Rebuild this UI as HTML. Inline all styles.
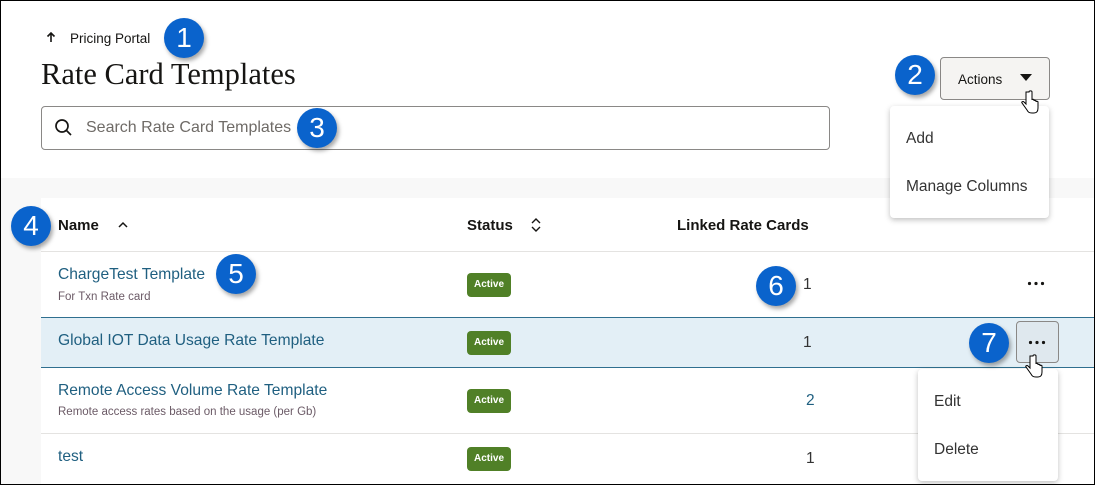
<!DOCTYPE html>
<html><head><style>
*{margin:0;padding:0;box-sizing:border-box}
body{width:1095px;height:485px;position:relative;overflow:hidden;background:#fff;font-family:"Liberation Sans",sans-serif;color:#161513}
.frame{position:absolute;left:0;top:0;width:1095px;height:485px;border:1px solid #000;z-index:50;pointer-events:none}
.a{position:absolute}
.c{position:absolute;width:40px;height:40px;border-radius:50%;background:#0a63cc;color:#fff;font-size:28px;line-height:40px;text-align:center;box-shadow:2px 3px 4px rgba(0,0,0,.35);z-index:20}
.link{color:#1f5f80;font-size:15.6px}
.sub{color:#6b5a66;font-size:11.5px}
.badge{position:absolute;left:467px;width:44px;height:24px;border-radius:4px;background:#508027;color:#fff;font-size:10px;font-weight:bold;text-align:center;line-height:24px}
.hl{position:absolute;left:41px;right:0;height:1px;background:#e4e3e1}
.menu{position:absolute;background:#fff;border-radius:4px;box-shadow:0 2px 6px rgba(0,0,0,.25);z-index:10;font-size:15.5px;color:#333}
</style></head><body>
<div class="frame"></div>
<svg class="a" style="left:46px;top:31px" width="10" height="12" viewBox="0 0 10 12"><path d="M5 11V2M1.5 5.5L5 2l3.5 3.5" fill="none" stroke="#161513" stroke-width="1.6"/></svg>
<div class="a" style="left:70px;top:31px;font-size:13.5px">Pricing Portal</div>
<div class="c" style="left:164px;top:18px">1</div>
<div class="a" style="left:41px;top:57px;font-family:'Liberation Serif',serif;font-size:30.5px">Rate Card Templates</div>
<div class="a" style="left:41px;top:106px;width:789px;height:44px;border:1px solid #8a8886;border-radius:4px"></div>
<svg class="a" style="left:54px;top:118px" width="20" height="20" viewBox="0 0 20 20"><circle cx="8" cy="8" r="6" fill="none" stroke="#161513" stroke-width="1.7"/><line x1="12.5" y1="12.5" x2="17" y2="17" stroke="#161513" stroke-width="1.7"/></svg>
<div class="a" style="left:86px;top:119px;font-size:16px;color:#6f6b67">Search Rate Card Templates</div>
<div class="c" style="left:297px;top:108px">3</div>
<div class="c" style="left:895px;top:55px">2</div>
<div class="a" style="left:940px;top:57px;width:110px;height:43px;border:1px solid #8a8886;border-radius:4px;background:#f5f4f2;font-size:13.5px;line-height:43px;padding-left:17px">Actions</div>
<svg class="a" style="left:1020px;top:74px" width="12" height="8"><path d="M0 0h12L6 7z" fill="#161513"/></svg>
<div class="menu" style="left:890px;top:106px;width:159px;height:112px"><div class="a" style="left:16px;top:24px">Add</div><div class="a" style="left:16px;top:72px">Manage Columns</div></div>
<div class="a" style="left:0;top:178px;width:1095px;height:20px;background:#f8f8f8"></div>
<div class="a" style="left:0;top:178px;width:41px;height:307px;background:#f8f8f8"></div>
<div class="c" style="left:11px;top:206px">4</div>
<div class="a" style="left:58px;top:217px;font-size:15px;font-weight:bold">Name</div>
<svg class="a" style="left:118px;top:221px" width="10" height="7"><path d="M1 6l4-4 4 4" fill="none" stroke="#161513" stroke-width="1.5"/></svg>
<div class="a" style="left:467px;top:217px;font-size:15px;font-weight:bold">Status</div>
<svg class="a" style="left:531px;top:217px" width="10" height="16"><path d="M1 6l4-4 4 4M1 10l4 4 4-4" fill="none" stroke="#161513" stroke-width="1.4"/></svg>
<div class="a" style="left:677px;top:217px;font-size:15px;font-weight:bold">Linked Rate Cards</div>
<div class="hl" style="top:251px"></div>
<div class="a link" style="left:58px;top:266px">ChargeTest Template</div>
<div class="a sub" style="left:58px;top:291px">For  Txn Rate card</div>
<div class="c" style="left:216px;top:254px">5</div>
<div class="badge" style="top:273px">Active</div>
<div class="a" style="left:803px;top:276px;font-size:15.5px;color:#333">1</div>
<div class="c" style="left:756px;top:266px">6</div>
<svg class="a" style="left:1027px;top:281px" width="18" height="5"><circle cx="2.5" cy="2.5" r="1.6" fill="#161513"/><circle cx="9" cy="2.5" r="1.6" fill="#161513"/><circle cx="15.5" cy="2.5" r="1.6" fill="#161513"/></svg>
<div class="a" style="left:41px;top:317px;right:0;height:51px;background:#e3eff6;border-top:1px solid #2f6f8f;border-bottom:1px solid #2f6f8f"></div>
<div class="a link" style="left:58px;top:332px">Global IOT Data Usage Rate Template</div>
<div class="badge" style="top:331px">Active</div>
<div class="a" style="left:803px;top:334px;font-size:15.5px;color:#333">1</div>
<div class="c" style="left:969px;top:323px">7</div>
<div class="a" style="left:1016px;top:321px;width:43px;height:42px;border:1px solid #8a8886;border-radius:4px;background:#dfe8ee"></div>
<svg class="a" style="left:1028px;top:340px" width="18" height="5"><circle cx="2.5" cy="2.5" r="1.6" fill="#161513"/><circle cx="9" cy="2.5" r="1.6" fill="#161513"/><circle cx="15.5" cy="2.5" r="1.6" fill="#161513"/></svg>
<div class="a link" style="left:58px;top:382px">Remote Access Volume Rate Template</div>
<div class="a sub" style="left:58px;top:406px">Remote access rates based on the usage (per Gb)</div>
<div class="badge" style="top:389px">Active</div>
<div class="a" style="left:806px;top:392px;font-size:15.5px;color:#1f5f80">2</div>
<div class="hl" style="top:433px"></div>
<div class="a link" style="left:58px;top:448px">test</div>
<div class="badge" style="top:447px">Active</div>
<div class="a" style="left:806px;top:450px;font-size:15.5px;color:#333">1</div>
<div class="menu" style="left:918px;top:369px;width:140px;height:112px"><div class="a" style="left:16px;top:24px">Edit</div><div class="a" style="left:16px;top:72px">Delete</div></div>
<svg class="a" style="left:1020px;top:90px;z-index:30" width="20" height="26" viewBox="0 0 20 26"><path d="M6 2v12l-2-2c-1-1-3 0-2 1l5 7c1 2 2 3 5 3h2c3 0 4-2 4-5v-6c0-1-2-1-2 0v-1c0-1-2-1-2 0v-1c0-1-2-1-2 0V2c0-1.5-3-1.5-3 0z" fill="#fff" stroke="#000" stroke-width="1"/></svg>
<svg class="a" style="left:1024px;top:354px;z-index:30" width="20" height="26" viewBox="0 0 20 26"><path d="M6 2v12l-2-2c-1-1-3 0-2 1l5 7c1 2 2 3 5 3h2c3 0 4-2 4-5v-6c0-1-2-1-2 0v-1c0-1-2-1-2 0v-1c0-1-2-1-2 0V2c0-1.5-3-1.5-3 0z" fill="#fff" stroke="#000" stroke-width="1"/></svg>
</body></html>
